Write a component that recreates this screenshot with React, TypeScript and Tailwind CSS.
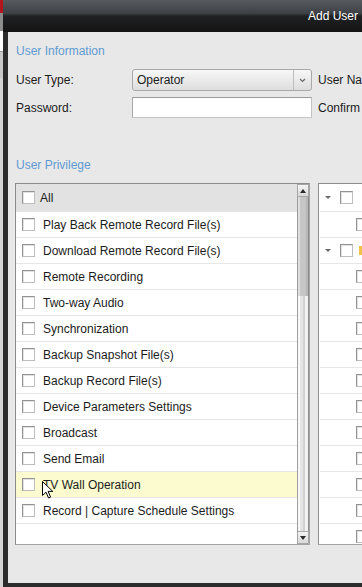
import React from "react"

const privileges = [
  "Play Back Remote Record File(s)",
  "Download Remote Record File(s)",
  "Remote Recording",
  "Two-way Audio",
  "Synchronization",
  "Backup Snapshot File(s)",
  "Backup Record File(s)",
  "Device Parameters Settings",
  "Broadcast",
  "Send Email",
  "TV Wall Operation",
  "Record | Capture Schedule Settings",
]

// right tree: which rows are parent nodes (with expander)
const treeRows = [true, false, true, false, false, false, false, false, false, false, false, false, false, false]

const Checkbox = () => (
  <div className="w-[13px] h-[13px] shrink-0 bg-white border border-[#bdbdbd] border-t-[#939393] border-l-[#939393] shadow-[inset_1px_1px_0_#e2e2e2]" />
)

const Expander = () => (
  <div className="w-0 h-0 border-l-[3px] border-r-[3px] border-t-[3px] border-l-transparent border-r-transparent border-t-[#6b6b6b]" />
)

export default function App() {
  return (
    <div className="relative w-[362px] h-[587px] overflow-hidden flex bg-white text-[12px] text-[#1b1b1b] font-['Liberation_Sans',Arial,sans-serif]">
      {/* application behind the dialog */}
      <div className="w-[3px] shrink-0 flex flex-col">
        <div className="h-[13px] bg-[#b3161c]" />
        <div className="h-[18px] bg-[#8c8c8c]" />
        <div className="h-[21px] bg-white border-b border-[#9a9a9a]" />
        <div className="h-[26px] bg-[#c9c9c9]" />
        <div className="flex-1 bg-[#d4d4d4]" />
      </div>

      <div className="flex-1 min-w-0 flex flex-col">
        <div className="h-[32px] shrink-0 flex items-center pl-[305px] whitespace-nowrap text-white text-[12px] bg-[linear-gradient(to_bottom,#575b60_0%,#3d4044_42%,#202123_50%,#141414_100%)]">
          Add User
        </div>

        <div className="flex-1 flex flex-col bg-[#e8e8e8] border-l-[5px] border-b-[4px] border-[#2c2c2c] pl-[8px] pt-[12px] whitespace-nowrap">
          <div className="h-[14px] leading-[14px] text-[#5f9bd2]">User Information</div>

          <div className="mt-[11px] h-[22px] flex items-center">
            <div className="w-[116px] shrink-0">User Type:</div>
            <div className="w-[180px] h-[22px] shrink-0 flex items-center rounded-[3px] border border-[#a9a9a9] bg-[linear-gradient(to_bottom,#f7f7f7,#dedede)]">
              <div className="flex-1 pl-[4px]">Operator</div>
              <div className="w-[18px] h-full flex items-center justify-center border-l border-[#bdbdbd]">
                <svg width="7" height="5" viewBox="0 0 7 5">
                  <path d="M1 1 L3.5 3.5 L6 1" fill="none" stroke="#6a6a6a" strokeWidth="1.2" />
                </svg>
              </div>
            </div>
            <div className="ml-[6px]">User Name:</div>
          </div>

          <div className="mt-[6px] h-[21px] flex items-center">
            <div className="w-[116px] shrink-0">Password:</div>
            <div className="w-[180px] h-[21px] shrink-0 bg-white border border-[#c4c4c4] border-t-[#9a9a9a] border-l-[#a8a8a8]" />
            <div className="ml-[6px]">Confirm Password:</div>
          </div>

          <div className="mt-[40px] h-[14px] leading-[14px] text-[#5f9bd2]">User Privilege</div>

          <div className="mt-[11px] h-[362px] flex -ml-px">
            {/* privilege list */}
            <div className="w-[295px] shrink-0 flex bg-white border border-[#a3a3a3] border-t-[#8c8c8c] border-l-[#8c8c8c]">
              <div className="flex-1 flex flex-col">
                <div className="h-[28px] flex items-center pl-[6px] gap-[5px] bg-[#e2e2e2] border-b border-[#e6e6e6]">
                  <Checkbox />
                  <span>All</span>
                </div>
                {privileges.map((p) => (
                  <div
                    key={p}
                    className={`h-[26px] flex items-center pl-[6px] gap-[8px] border-b border-[#e6e6e6] ${
                      p === "TV Wall Operation" ? "bg-[#fbfbcf]" : ""
                    }`}
                  >
                    <Checkbox />
                    <span>{p}</span>
                  </div>
                ))}
              </div>

              {/* scrollbar */}
              <div className="w-[12px] shrink-0 flex flex-col">
                <div className="h-[13px] flex items-center justify-center bg-[linear-gradient(to_bottom,#f4f4f4,#d9d9d9)] border border-[#a6a6a6]">
                  <div className="w-0 h-0 border-l-[3px] border-r-[3px] border-b-[4px] border-l-transparent border-r-transparent border-b-[#2a2a2a]" />
                </div>
                <div className="h-[99px] bg-[linear-gradient(to_right,#9d9d9d_0px,#9d9d9d_1px,#dedede_1px,#dedede_3px,#c6c6c6_3px,#c6c6c6_9px,#b6b6b6_9px,#b6b6b6_11px,#8f8f8f_11px)]" />
                <div className="flex-1 bg-[linear-gradient(to_right,#9d9d9d_0px,#9d9d9d_1px,#f8f8f8_1px,#f8f8f8_3px,#e4e4e4_3px,#e4e4e4_6px,#d2d2d2_6px,#d2d2d2_8px,#f2f2f2_8px,#f2f2f2_11px,#8f8f8f_11px)]" />
                <div className="h-[13px] flex items-center justify-center bg-[linear-gradient(to_bottom,#f4f4f4,#d9d9d9)] border border-[#a6a6a6]">
                  <div className="w-0 h-0 border-l-[3px] border-r-[3px] border-t-[4px] border-l-transparent border-r-transparent border-t-[#2a2a2a]" />
                </div>
              </div>
            </div>

            {/* channel tree */}
            <div className="ml-[8px] w-[60px] shrink-0 flex flex-col bg-white border border-[#a3a3a3] border-t-[#8c8c8c] border-l-[#8c8c8c] overflow-hidden">
              {treeRows.map((parent, i) => (
                <div
                  key={i}
                  className={`${i === 0 ? "h-[28px]" : "h-[26px]"} shrink-0 flex items-center border-b border-[#e6e6e6] ml-[1px]`}
                >
                  {parent ? (
                    <div className="flex items-center pl-[5px]">
                      <Expander />
                      <div className="ml-[9px]">
                        <Checkbox />
                      </div>
                      {i === 2 && <div className="ml-[6px] w-[4px] h-[9px] bg-[#f0c24a]" />}
                    </div>
                  ) : (
                    <div className="pl-[36px]">
                      <Checkbox />
                    </div>
                  )}
                </div>
              ))}
            </div>
          </div>
        </div>
      </div>

      {/* mouse pointer over the highlighted row */}
      <svg className="absolute left-[42px] top-[481px]" width="12" height="18" viewBox="0 0 12 18">
        <path
          d="M0.5 0.5 L0.5 14.5 L4 11.2 L6.6 17 L8.6 16.1 L6.1 10.4 L10.8 10.4 Z"
          fill="#ffffff"
          stroke="#000000"
          strokeWidth="1"
          strokeLinejoin="round"
        />
      </svg>
    </div>
  )
}
